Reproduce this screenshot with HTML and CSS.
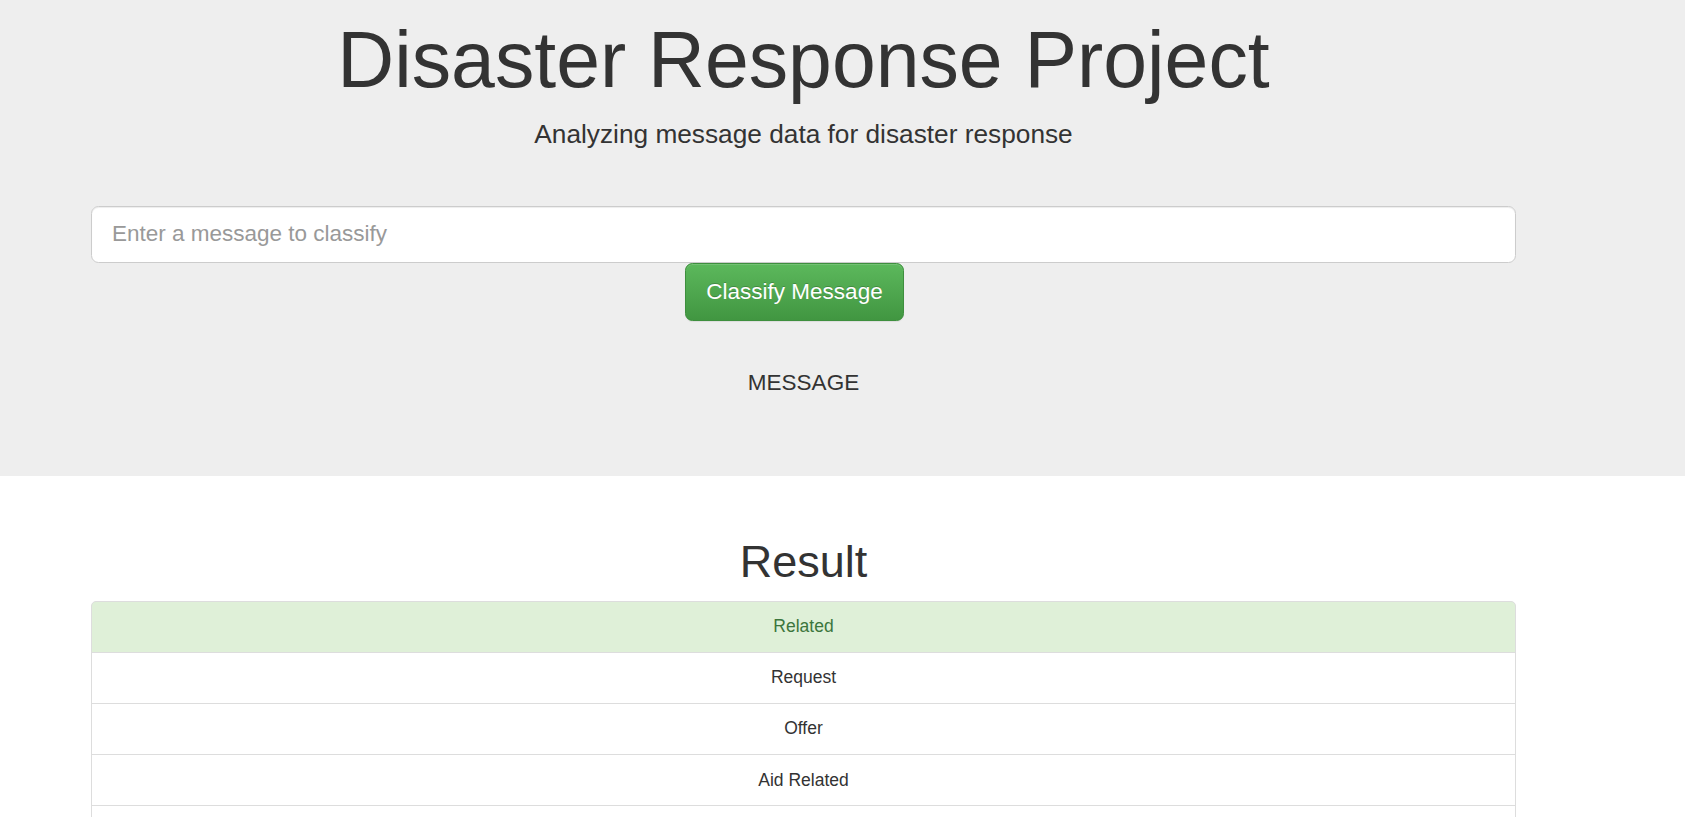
FILE: index.html
```html
<!DOCTYPE html>
<html lang="en">
<head>
<meta charset="utf-8">
<title>Disasters</title>
<link rel="stylesheet" href="styles.css">
</head>
<body>
<div class="jumbotron">
  <div class="container">
    <h1 class="title">Disaster Response Project</h1>
    <p class="subtitle">Analyzing message data for disaster response</p>
    <form class="form">
      <input class="query" type="text" placeholder="Enter a message to classify">
      <div class="btn-row">
        <button type="button" class="btn-success">Classify Message</button>
      </div>
    </form>
    <p class="message">MESSAGE</p>
  </div>
</div>
<div class="container">
  <h1 class="result">Result</h1>
  <ul class="list">
    <li class="item item-success">Related</li>
    <li class="item">Request</li>
    <li class="item">Offer</li>
    <li class="item">Aid Related</li>
    <li class="item">Medical Help</li>
    <li class="item">Medical Products</li>
    <li class="item">Search And Rescue</li>
  </ul>
</div>
</body>
</html>
```
FILE: styles.css
```css
html, body {
  margin: 0;
  padding: 0;
}
body {
  font-family: "Liberation Sans", Arial, Helvetica, sans-serif;
  font-size: 17.5px;
  line-height: 1.4286;
  color: #333;
  background: #fff;
}
.container {
  width: 1425px;
  margin-left: 91px;
}
.jumbotron {
  background: #eee;
  height: 476px;
  box-sizing: border-box;
  padding-top: 17px;
}
.title {
  margin: 0;
  font-size: 78.75px;
  line-height: 86.6px;
  font-weight: normal;
  text-align: center;
  color: #333;
}
.subtitle {
  margin: 16px 0 0;
  font-size: 26.25px;
  line-height: 28.9px;
  text-align: center;
}
.form {
  margin: 57px 0 0;
}
.query {
  display: block;
  box-sizing: border-box;
  width: 100%;
  height: 57px;
  margin: 0;
  padding: 0 20px;
  font-family: inherit;
  font-size: 22.5px;
  color: #555;
  background: #fff;
  border: 1px solid #ccc;
  border-radius: 7.5px;
  box-shadow: inset 0 1px 1px rgba(0,0,0,.075);
  outline: none;
}
.query::placeholder {
  color: #999;
}
.btn-row {
  display: flex;
  padding-left: 594px;
}
.btn-success {
  box-sizing: border-box;
  width: 219px;
  height: 58px;
  padding: 0;
  font-family: inherit;
  font-size: 22.5px;
  color: #fff;
  background-color: #5cb85c;
  background-image: linear-gradient(to bottom, #5cb85c 0, #419641 100%);
  border: 1px solid #3e8f3e;
  border-radius: 7.5px;
  text-shadow: 0 -1px 0 rgba(0,0,0,.2);
  box-shadow: inset 0 1px 0 rgba(255,255,255,.15), 0 1px 1px rgba(0,0,0,.075);
  cursor: pointer;
}
.message {
  margin: 46px 0 0;
  font-size: 22.5px;
  line-height: 32px;
  text-align: center;
}
.result {
  margin: 61px 0 0;
  font-size: 45px;
  line-height: 49.5px;
  font-weight: normal;
  text-align: center;
}
.list {
  list-style: none;
  margin: 14px 0 0;
  padding: 0;
}
.item {
  padding: 12.6px 18.75px;
  line-height: 25px;
  text-align: center;
  background: #fff;
  border: 1px solid #ddd;
  margin-bottom: -1px;
}
.item:first-child {
  border-top-left-radius: 5px;
  border-top-right-radius: 5px;
}
.item-success {
  color: #3c763d;
  background: #dff0d8;
}
```
